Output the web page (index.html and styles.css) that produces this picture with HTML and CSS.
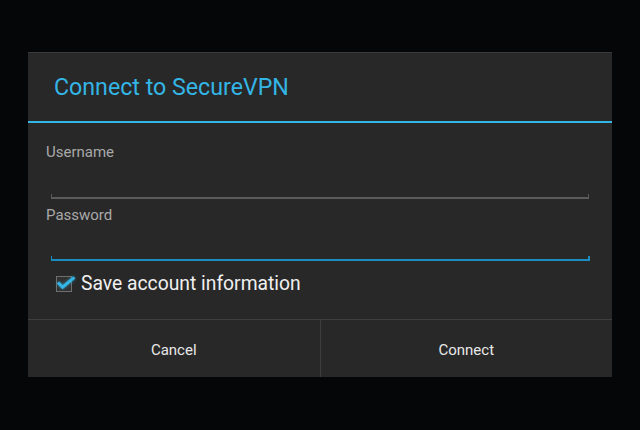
FILE: index.html
```html
<!DOCTYPE html>
<html>
<head>
<meta charset="utf-8">
<link rel="stylesheet" href="styles.css">
</head>
<body>
<div class="dialog">
  <div class="title">Connect to SecureVPN</div>
  <div class="label label-first">Username</div>
  <div class="field"><div class="underline"></div></div>
  <div class="label">Password</div>
  <div class="field field-focused"><div class="underline"></div></div>
  <div class="check-row">
    <span class="checkbox">
      <svg class="checkmark" width="22" height="18" viewBox="0 0 22 18"><path d="M3 7.5 L6.6 11.2 L17.2 2.4" fill="none" stroke="#33b5e5" stroke-width="3" stroke-linecap="square" stroke-linejoin="miter"/></svg>
    </span>
    <span class="check-label">Save account information</span>
  </div>
  <div class="buttons">
    <div class="btn">Cancel</div>
    <div class="btn btn-right">Connect</div>
  </div>
</div>
</body>
</html>
```
FILE: styles.css
```css
html, body {
  margin: 0;
  padding: 0;
  background: #050608;
  width: 640px;
  height: 430px;
  overflow: hidden;
}
body {
  padding-top: 52px;
  box-sizing: border-box;
  font-family: Roboto, "Liberation Sans", sans-serif;
}
.dialog {
  margin-left: 28px;
  width: 584px;
  background: #282828;
  border-top: 1px solid #3a3a3a;
  display: flex;
  flex-direction: column;
}
.title {
  height: 68px;
  line-height: 68px;
  padding-left: 26px;
  font-size: 23.2px;
  color: #33b5e5;
  border-bottom: 2px solid #33b5e5;
}
.label {
  margin-left: 18px;
  margin-top: 6px;
  font-size: 15px;
  line-height: 18px;
  color: #a9a9a9;
}
.label-first {
  margin-top: 20px;
}
.field {
  height: 39px;
  margin: 0 23px;
  display: flex;
  flex-direction: column;
  justify-content: flex-end;
}
.field-focused {
  height: 38px;
}
.underline {
  height: 3px;
  border-left: 1px solid #5b5b5b;
  border-right: 1px solid #5b5b5b;
  border-bottom: 2px solid #5b5b5b;
  margin-bottom: 1px;
}
.field-focused .underline {
  border-color: #1a8cbf;
  border-right-width: 2px;
  margin-right: -1px;
}
.check-row {
  height: 57px;
  box-sizing: border-box;
  padding: 11px 0 24px 28px;
  display: flex;
  align-items: center;
}
.checkbox {
  position: relative;
  width: 14px;
  height: 14px;
  border: 1px solid #6f6f6f;
  background: #303030;
  flex: none;
}
.checkmark {
  position: absolute;
  left: -1px;
  top: -1px;
  overflow: visible;
  filter: drop-shadow(0 0 1.5px rgba(51, 181, 229, 0.8));
}
.check-label {
  margin-left: 9px;
  font-size: 19.3px;
  line-height: 22px;
  color: #f0f0f0;
}
.buttons {
  border-top: 1px solid #3e3e3e;
  display: flex;
}
.btn {
  flex: 1;
  height: 57px;
  box-sizing: border-box;
  padding-top: 21px;
  text-align: center;
  font-size: 15px;
  line-height: 18px;
  color: #e8e8e8;
}
.btn-right {
  border-left: 1px solid #3e3e3e;
}
```
